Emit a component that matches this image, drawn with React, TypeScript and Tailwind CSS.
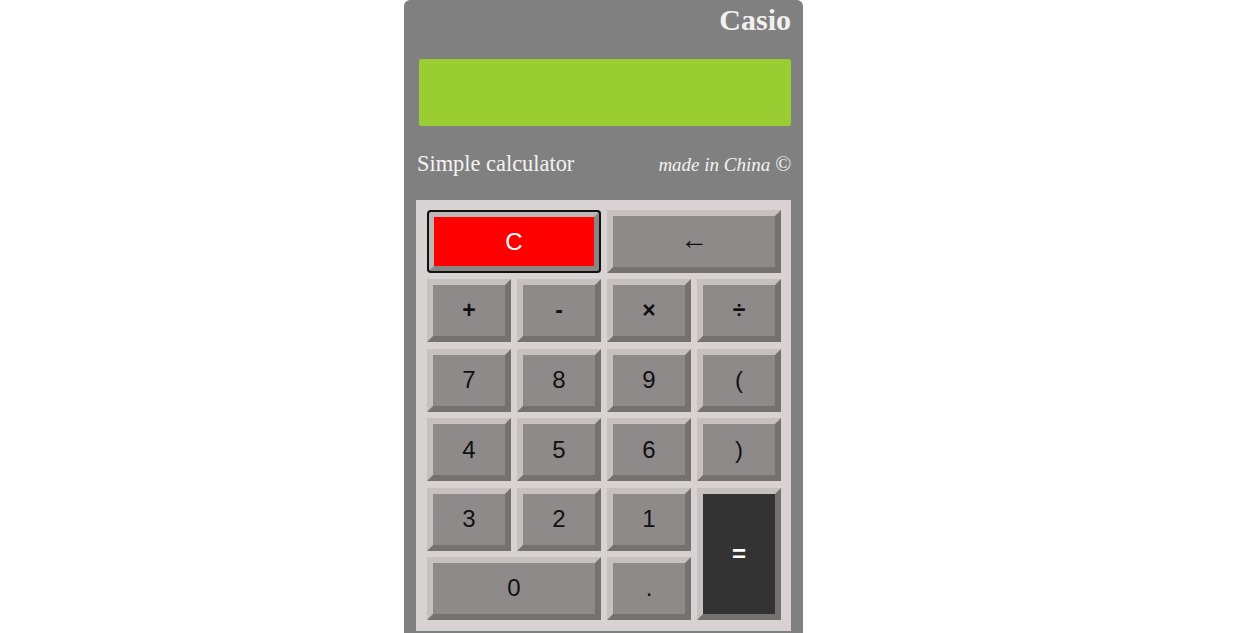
import React from 'react';

type Key = {
  label: string;
  span?: string;
  kind?: 'clear' | 'equals' | 'normal';
  size?: string;
};

const keys: Key[] = [
  { label: 'C', span: 'col-span-2', kind: 'clear' },
  { label: '←', span: 'col-span-2', size: 'text-[28px] pb-[4px]' },
  { label: '+', size: 'text-[23px] font-bold' },
  { label: '-', size: 'text-[23px] font-bold' },
  { label: '×', size: 'text-[23px] font-bold' },
  { label: '÷', size: 'text-[23px] font-bold' },
  { label: '7' },
  { label: '8' },
  { label: '9' },
  { label: '(' },
  { label: '4' },
  { label: '5' },
  { label: '6' },
  { label: ')' },
  { label: '3' },
  { label: '2' },
  { label: '1' },
  { label: '=', span: 'row-span-2', kind: 'equals', size: 'text-[24px] font-bold' },
  { label: '0', span: 'col-span-2' },
  { label: '.' },
];

const CalcKey: React.FC<{ k: Key }> = ({ k }) => {
  if (k.kind === 'clear') {
    return (
      <button className="col-span-2 flex items-center justify-center rounded-[4px] border-[7px] border-t-[#bdb8b8] border-l-[#bdb8b8] border-r-[#8a8585] border-b-[#8a8585] bg-[#ff0000] text-[24px] text-white outline-2 outline-offset-[-2px] outline-[#111]">
        {k.label}
      </button>
    );
  }
  const face = k.kind === 'equals' ? 'bg-[#333333] text-white' : 'bg-[#8f8a8a] text-[#111111]';
  return (
    <button
      className={`${k.span ?? ''} ${face} ${k.size ?? 'text-[24px]'} flex items-center justify-center border-[6px] border-t-[#c6c0c0] border-l-[#c6c0c0] border-r-[#757171] border-b-[#757171] leading-none`}
    >
      {k.label}
    </button>
  );
};

export default function App() {
  return (
    <div className="min-h-[633px] bg-white">
      <div
        className="ml-[404px] w-[399px] rounded-t-[6px] bg-[#808080] px-3 pt-[5px] pb-3"
        style={{ fontFamily: '"Liberation Serif", serif' }}
      >
        {/* header */}
        <div className="text-right text-[30px] font-bold leading-[30px] text-[#f3f0f0]">Casio</div>

        {/* display */}
        <div className="mt-[24px] ml-[3px] h-[67px] rounded-[2px] bg-[#9acd32]"></div>

        <div className="mt-[27px] flex items-baseline justify-between text-[#f5f2f2]">
          <span className="pl-px text-[22.4px] leading-[22px]">Simple calculator</span>
          <span className="text-[19px] italic leading-[22px]">
            made in China <span className="text-[21px]">©</span>
          </span>
        </div>

        {/* keypad */}
        <div
          className="mt-[24px] bg-[#d8d2d2] pt-[10px] pr-[10px] pb-[11px] pl-[11px]"
          style={{ fontFamily: '"Liberation Sans", Arial, sans-serif' }}
        >
          <div className="grid grid-cols-[repeat(4,84px)] grid-rows-[repeat(6,63px)] gap-x-[6px] gap-y-[6.4px]">
            {keys.map((k) => (
              <CalcKey key={k.label} k={k} />
            ))}
          </div>
        </div>
      </div>
    </div>
  );
}
